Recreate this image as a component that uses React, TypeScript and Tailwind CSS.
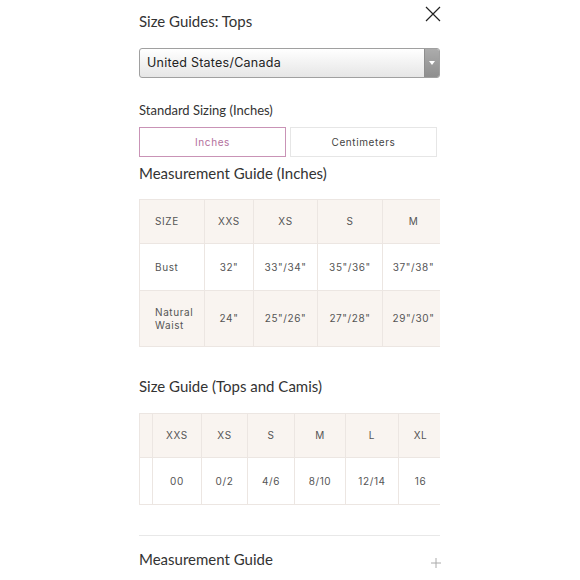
import React from "react";

const heading = "font-['Lato','Noto_Sans',sans-serif] text-[#333]";
const body = "font-['Inter','Noto_Sans',sans-serif]";

const measureCols = [65, 49, 64, 65, 62];
const measureRows: { cells: string[]; tint: boolean; h: number }[] = [
  { cells: ["SIZE", "XXS", "XS", "S", "M"], tint: true, h: 44 },
  { cells: ["Bust", "32\"", "33\"/34\"", "35\"/36\"", "37\"/38\""], tint: false, h: 47 },
  { cells: ["Natural\nWaist", "24\"", "25\"/26\"", "27\"/28\"", "29\"/30\""], tint: true, h: 56 },
];

const sizeCols = [13, 49, 46, 47, 51, 53, 44];
const sizeRows: { cells: string[]; tint: boolean; h: number }[] = [
  { cells: ["", "XXS", "XS", "S", "M", "L", "XL"], tint: true, h: 44 },
  { cells: ["", "00", "0/2", "4/6", "8/10", "12/14", "16"], tint: false, h: 47 },
];

function Grid({ cols, rows, labelled }: { cols: number[]; rows: typeof measureRows; labelled?: boolean }) {
  const total = cols.reduce((a, b) => a + b, 0);
  return (
    <div className="w-[301px] overflow-hidden">
      <table
        className={`${body} border-collapse table-fixed text-[10px] text-[#555] tracking-[0.06em]`}
        style={{ width: total }}
      >
        <colgroup>
          {cols.map((w, i) => (
            <col key={i} style={{ width: w }} />
          ))}
        </colgroup>
        <tbody>
          {rows.map((r, ri) => (
            <tr key={ri} className={r.tint ? "bg-[#f9f4f0]" : "bg-white"} style={{ height: r.h }}>
              {r.cells.map((c, ci) => (
                <td
                  key={ci}
                  className={`border border-[#ece6e2] p-0 whitespace-pre leading-[13px] ${
                    ci === 0 && labelled ? "text-left pl-[15px]" : "text-center"
                  }`}
                >
                  {c}
                </td>
              ))}
            </tr>
          ))}
        </tbody>
      </table>
    </div>
  );
}

export default function App() {
  return (
    <div className="min-h-[580px] bg-white">
      <div className="ml-[139px] w-[301px] pt-[5px]">
        {/* Header */}
        <div className="flex items-start justify-between">
          <h1 className={`${heading} text-[15px] leading-[20px] mt-[6px]`}>Size Guides: Tops</h1>
          <svg width="16" height="16" viewBox="0 0 16 16" className="mt-[1px] mr-[-1px]">
            <path d="M1 1 L15 15 M15 1 L1 15" stroke="#222" strokeWidth="1.2" fill="none" />
          </svg>
        </div>

        {/* Region select */}
        <div className="mt-[17px] flex h-[30px] rounded-[3px] border border-[#a0a0a0] bg-gradient-to-b from-white to-[#e6e6e6] overflow-hidden">
          <div className={`${body} flex-1 flex items-center pl-[7px] text-[12.5px] text-[#222] tracking-[0.02em]`}>
            United States/Canada
          </div>
          <div className="w-[15px] flex items-center justify-center bg-gradient-to-b from-[#acacac] to-[#8e8e8e] border-l border-[#8e8e8e]">
            <svg width="6" height="5" viewBox="0 0 6 5">
              <path d="M0 0 L6 0 L3 4 Z" fill="#fff" />
            </svg>
          </div>
        </div>

        <h2 className={`${heading} mt-[23px] text-[13px] leading-[18px]`}>Standard Sizing (Inches)</h2>

        {/* Unit toggle */}
        <div className="mt-[8px] flex gap-[4px]">
          <button className={`${body} w-[147px] h-[30px] border-[1.5px] border-[#c993b6] text-[10px] text-[#b36f9c] tracking-[0.06em]`}>
            Inches
          </button>
          <button className={`${body} w-[147px] h-[30px] border border-[#e6e6e6] text-[10px] text-[#444] tracking-[0.06em]`}>
            Centimeters
          </button>
        </div>

        <h2 className={`${heading} mt-[6px] text-[15px] leading-[20px]`}>Measurement Guide (Inches)</h2>

        <div className="mt-[16px]">
          <Grid cols={measureCols} rows={measureRows} labelled />
        </div>

        <h2 className={`${heading} mt-[29px] text-[15px] leading-[20px]`}>Size Guide (Tops and Camis)</h2>

        <div className="mt-[17px]">
          <Grid cols={sizeCols} rows={sizeRows} />
        </div>

        {/* Accordion */}
        <div className="mt-[30px] border-t border-[#e8e8e8] pt-[13px] flex items-center justify-between">
          <span className={`${heading} text-[15px] leading-[20px]`}>Measurement Guide</span>
          <svg width="10" height="10" viewBox="0 0 10 10" className="mt-[8px] mr-[-1px]">
            <path d="M5 0 V10 M0 5 H10" stroke="#aaa" strokeWidth="1" />
          </svg>
        </div>
      </div>
    </div>
  );
}
